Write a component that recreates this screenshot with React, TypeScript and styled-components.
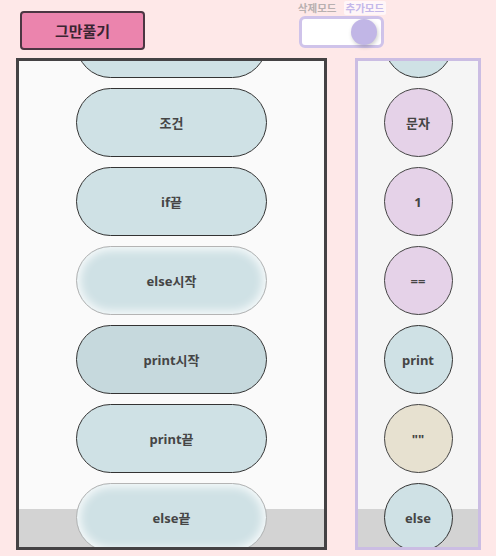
import React from 'react';
import styled, { createGlobalStyle, css } from 'styled-components';

const GlobalStyle = createGlobalStyle`
  html, body {
    margin: 0;
    padding: 0;
    background: #fee8e8;
    font-family: "Noto Sans", "Noto Sans CJK KR", sans-serif;
  }
`;

const Page = styled.div`
  width: 496px;
  height: 556px;
  overflow: hidden;
`;

const Header = styled.div`
  display: flex;
  align-items: flex-start;
  height: 58px;
  padding-left: 20px;
  gap: 147px;
`;

const StopButton = styled.button`
  margin-top: 11px;
  width: 125px;
  height: 39px;
  background: #eb84ad;
  border: 2px solid #4b3642;
  border-radius: 4px;
  font-family: "Noto Sans CJK KR", sans-serif;
  font-weight: 700;
  font-size: 15px;
  color: #3a2532;
  padding: 0;
`;

const ModeBox = styled.div`
  display: flex;
  flex-direction: column;
  align-items: center;
  width: 98px;
  padding-top: 1px;
`;

const ModeLabels = styled.div`
  display: flex;
  gap: 5px;
  height: 14px;
`;

const ModeLabel = styled.span<{ active?: boolean }>`
  font-family: "Noto Sans CJK KR", sans-serif;
  font-weight: 700;
  font-size: 10.5px;
  line-height: 13px;
  padding: 0 2px;
  color: ${p => (p.active ? '#c4b8ea' : '#b8b0b0')};
  background: ${p => (p.active ? '#fff6f8' : 'transparent')};
  border-radius: 2px;
`;

const Switch = styled.div`
  margin-top: 1px;
  box-sizing: border-box;
  width: 85px;
  height: 32px;
  background: #fff;
  border: 3px solid #cfc3ea;
  border-radius: 6px;
  display: flex;
  align-items: center;
  justify-content: flex-end;
  padding-right: 4px;
`;

const Knob = styled.div`
  width: 26px;
  height: 26px;
  border-radius: 50%;
  background: #c1b6e6;
  box-shadow: 1px 2px 4px rgba(0, 0, 0, 0.2);
`;

const Panels = styled.div`
  display: flex;
  gap: 28px;
  padding-left: 16px;
`;

const Panel = styled.div<{ variant: 'code' | 'blocks' }>`
  box-sizing: border-box;
  height: 492px;
  overflow: hidden;
  ${p =>
    p.variant === 'code'
      ? css`
          width: 311px;
          border: 3px solid #444244;
          background: linear-gradient(#fafafa 0, #fafafa calc(100% - 38px), #d3d3d3 calc(100% - 38px));
        `
      : css`
          width: 126px;
          border: 3px solid #cbbde3;
          background: linear-gradient(#f5f5f5 0, #f5f5f5 calc(100% - 38px), #d3d3d3 calc(100% - 38px));
        `}
`;

const List = styled.div`
  display: flex;
  flex-direction: column;
  align-items: center;
  gap: 10px;
  margin-top: -52px;
`;

type Tone = 'plain' | 'dark' | 'glow' | 'purple' | 'beige';

const toneStyles = {
  plain: css`
    background: #cfe1e5;
    border: 1px solid #333;
  `,
  dark: css`
    background: #c6d9dd;
    border: 1px solid #333;
  `,
  glow: css`
    background: #cfe1e5;
    border: 1px solid #b4b4b4;
    box-shadow: inset 0 0 10px 3px rgba(255, 255, 255, 0.85);
  `,
  purple: css`
    background: #e5d2e8;
    border: 1px solid #444;
  `,
  beige: css`
    background: #e7e1d0;
    border: 1px solid #444;
  `,
};

const Chip = styled.div<{ tone: Tone; round?: boolean }>`
  box-sizing: border-box;
  flex-shrink: 0;
  height: 69px;
  width: ${p => (p.round ? '69px' : '191px')};
  border-radius: 35px;
  display: flex;
  align-items: center;
  justify-content: center;
  font-family: "Noto Sans", "Noto Sans CJK KR", sans-serif;
  font-weight: 700;
  font-size: 13px;
  color: #454545;
  ${p => toneStyles[p.tone]}
`;

const codeBlocks: { label: string; tone: Tone }[] = [
  { label: 'if시작', tone: 'plain' },
  { label: '조건', tone: 'plain' },
  { label: 'if끝', tone: 'plain' },
  { label: 'else시작', tone: 'glow' },
  { label: 'print시작', tone: 'dark' },
  { label: 'print끝', tone: 'plain' },
  { label: 'else끝', tone: 'glow' },
];

const paletteBlocks: { label: string; tone: Tone }[] = [
  { label: 'if', tone: 'plain' },
  { label: '문자', tone: 'purple' },
  { label: '1', tone: 'purple' },
  { label: '==', tone: 'purple' },
  { label: 'print', tone: 'plain' },
  { label: '""', tone: 'beige' },
  { label: 'else', tone: 'plain' },
];

export default function App() {
  return (
    <Page>
      <GlobalStyle />
      <Header>
        <StopButton>그만풀기</StopButton>
        <ModeBox>
          <ModeLabels>
            <ModeLabel>삭제모드</ModeLabel>
            <ModeLabel active>추가모드</ModeLabel>
          </ModeLabels>
          <Switch>
            <Knob />
          </Switch>
        </ModeBox>
      </Header>
      <Panels>
        <Panel variant="code">
          <List>
            {codeBlocks.map((b, i) => (
              <Chip key={i} tone={b.tone}>
                {b.label}
              </Chip>
            ))}
          </List>
        </Panel>
        <Panel variant="blocks">
          <List>
            {paletteBlocks.map((b, i) => (
              <Chip key={i} tone={b.tone} round>
                {b.label}
              </Chip>
            ))}
          </List>
        </Panel>
      </Panels>
    </Page>
  );
}
